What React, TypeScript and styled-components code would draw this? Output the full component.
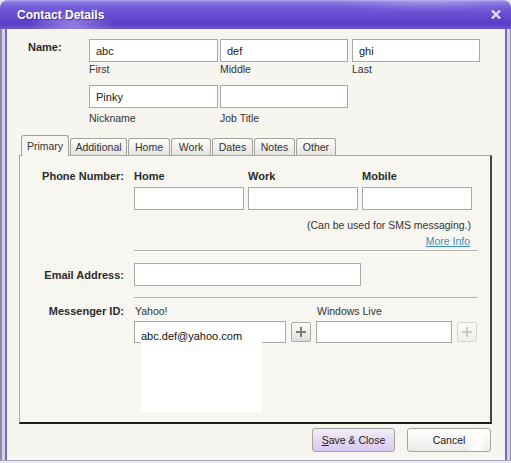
import styled, { createGlobalStyle, css } from 'styled-components'

const GlobalStyle = createGlobalStyle`
  html, body {
    margin: 0;
    padding: 0;
    background: #e6e5ea;
  }
  body {
    font-family: 'Liberation Sans', Arial, sans-serif;
  }
`

const tabs = [
  { name: 'Primary', w: 48 },
  { name: 'Additional', w: 57 },
  { name: 'Home', w: 42 },
  { name: 'Work', w: 40 },
  { name: 'Dates', w: 41 },
  { name: 'Notes', w: 41 },
  { name: 'Other', w: 40 },
]

const PlusIcon = ({ color }: { color: string }) => (
  <svg width="10" height="10" viewBox="0 0 10 10">
    <path d="M5 0v10M0 5h10" stroke={color} strokeWidth="2" />
  </svg>
)

const App = () => {
  return (
    <>
      <GlobalStyle />
      <Window>
        <TitleBar>
          <Title>Contact Details</Title>
          <svg width="10" height="9" viewBox="0 0 10 9">
            <path d="M1 0.5l8 8M9 0.5l-8 8" stroke="#e2ddf7" strokeWidth="2.4" />
          </svg>
        </TitleBar>
        <Frame>
          <NameSection>
            <NameLabel>Name:</NameLabel>
            <Field>
              <TextBox $w={129} readOnly value="abc" />
              <Caption>First</Caption>
            </Field>
            <Field>
              <TextBox $w={128} readOnly value="def" />
              <Caption>Middle</Caption>
            </Field>
            <Field>
              <TextBox $w={128} readOnly value="ghi" />
              <Caption>Last</Caption>
            </Field>
            <Field $newRow>
              <TextBox $w={129} readOnly value="Pinky" />
              <Caption $gap={3}>Nickname</Caption>
            </Field>
            <Field>
              <TextBox $w={128} readOnly value="" />
              <Caption $gap={3}>Job Title</Caption>
            </Field>
          </NameSection>

          <TabStrip>
            {tabs.map((t, i) => (
              <Tab key={t.name} $w={t.w} $active={i === 0}>
                {t.name}
              </Tab>
            ))}
          </TabStrip>

          <Panel>
            <FormRow $mt={13}>
              <RowLabel>Phone Number:</RowLabel>
              <div>
                <PhoneGrid>
                  <Heading>Home</Heading>
                  <Heading>Work</Heading>
                  <Heading>Mobile</Heading>
                  <TextBox $w={110} readOnly value="" />
                  <TextBox $w={110} readOnly value="" />
                  <TextBox $w={110} readOnly value="" />
                </PhoneGrid>
                <Note>(Can be used for SMS messaging.)</Note>
                <MoreInfo href="#">More Info</MoreInfo>
              </div>
            </FormRow>
            <Separator $mt={2} />

            <FormRow $mt={11}>
              <RowLabel $center>Email Address:</RowLabel>
              <TextBox $w={227} readOnly value="" />
            </FormRow>
            <Separator $mt={11} />

            <FormRow $mt={5}>
              <RowLabel>Messenger ID:</RowLabel>
              <MessengerGrid>
                <SubLabel $span={2}>Yahoo!</SubLabel>
                <SubLabel $span={2}>Windows Live</SubLabel>
                <InputWrap>
                  <TextBox $w={152} $h={22} readOnly value="" />
                  <Suggest>abc.def@yahoo.com</Suggest>
                </InputWrap>
                <PlusButton>
                  <PlusIcon color="#7b7b78" />
                </PlusButton>
                <TextBox $w={136} $h={22} readOnly value="" />
                <PlusButton $disabled>
                  <PlusIcon color="#cbcac6" />
                </PlusButton>
              </MessengerGrid>
            </FormRow>
          </Panel>

          <Footer>
            <DialogButton $w={83} $primary>
              <u>S</u>ave &amp; Close
            </DialogButton>
            <DialogButton $w={84}>Cancel</DialogButton>
          </Footer>
        </Frame>
      </Window>
    </>
  )
}

export default App

const Window = styled.div`
  width: 511px;
  height: 463px;
  display: flex;
  flex-direction: column;
  overflow: hidden;
`

const TitleBar = styled.div`
  height: 29px;
  flex-shrink: 0;
  box-sizing: border-box;
  border-radius: 8px 8px 0 0;
  display: flex;
  align-items: center;
  justify-content: space-between;
  padding: 0 10px 0 17px;
  background:
    radial-gradient(ellipse 62px 20px at 72px 24px, rgba(224, 196, 255, 0.45), rgba(224, 196, 255, 0) 70%),
    radial-gradient(ellipse 140px 12px at 430px 3px, rgba(255, 255, 255, 0.2), rgba(255, 255, 255, 0) 70%),
    linear-gradient(180deg, #b4aaee 0, #8b7ae2 2px, #7660da 6px, #6b53d4 12px, #5e44ca 20px, #5a3fc6 25px, #6a55d0 28px);
`

const Title = styled.span`
  color: #fff;
  font-weight: bold;
  font-size: 12px;
  text-shadow: 1px 1px 0 rgba(40, 20, 110, 0.55);
`

const Frame = styled.div`
  flex: 1;
  display: flex;
  flex-direction: column;
  padding: 10px 19px 0 19px;
  background: #f6f5ef;
  box-shadow:
    inset 0 -2px 0 #eceaf3,
    inset 0 -3px 0 #a4a0b8,
    inset 2px 0 0 #8d8aa6,
    inset 5px 0 0 #d6d2ec,
    inset 7px 0 0 #7668c6,
    inset -1px 0 0 #8d8aa6,
    inset -4px 0 0 #d6d2ec,
    inset -6px 0 0 #7668c6;
`

const NameSection = styled.div`
  display: grid;
  grid-template-columns: 70px 131px 132px 128px;
  row-gap: 9px;
`

const NameLabel = styled.div`
  padding: 1px 0 0 9px;
  font-size: 11px;
  line-height: 14px;
  font-weight: bold;
  color: #2b2b2b;
`

const Field = styled.div<{ $newRow?: boolean }>`
  display: flex;
  flex-direction: column;
  ${(p) => p.$newRow && 'grid-column-start: 2;'}
`

const TextBox = styled.input<{ $w: number; $h?: number }>`
  box-sizing: border-box;
  width: ${(p) => p.$w}px;
  height: ${(p) => p.$h ?? 23}px;
  margin: 0;
  padding: 0 6px;
  border: 1px solid #a9a8a2;
  border-radius: 0;
  background: #fff;
  font-family: 'Liberation Sans', Arial, sans-serif;
  font-size: 11px;
  color: #222;
  outline: none;
`

const Caption = styled.div<{ $gap?: number }>`
  margin-top: ${(p) => p.$gap ?? 0}px;
  font-size: 10.5px;
  line-height: 14px;
  color: #333;
`

const TabStrip = styled.div`
  display: flex;
  align-items: flex-end;
  gap: 1px;
  margin-top: 10px;
  padding-left: 2px;
  height: 20px;
`

const Tab = styled.div<{ $active?: boolean; $w: number }>`
  box-sizing: border-box;
  width: ${(p) => p.$w}px;
  height: 17px;
  display: flex;
  align-items: center;
  justify-content: center;
  border: 1px solid #a2a29c;
  border-bottom: none;
  border-radius: 3px 3px 0 0;
  background: linear-gradient(#fefefd, #e4e3de);
  font-size: 10.5px;
  color: #333;
  ${(p) =>
    p.$active &&
    css`
      position: relative;
      z-index: 1;
      height: 21px;
      margin-bottom: -1px;
      padding-bottom: 1px;
      background: #f7f6f0;
    `}
`

const Panel = styled.div`
  box-sizing: border-box;
  height: 269px;
  display: flex;
  flex-direction: column;
  background: #f7f6f0;
  border-top: 1px solid #a9a8a2;
  border-left: 1px solid #a9a8a2;
  border-right: 2px solid #454543;
  border-bottom: 2px solid #1c1c1c;
`

const FormRow = styled.div<{ $mt: number }>`
  display: grid;
  grid-template-columns: 104px 344px;
  column-gap: 10px;
  margin-top: ${(p) => p.$mt}px;
`

const RowLabel = styled.div<{ $center?: boolean }>`
  align-self: ${(p) => (p.$center ? 'center' : 'start')};
  text-align: right;
  font-size: 11px;
  line-height: 14px;
  font-weight: bold;
  color: #2b2b2b;
`

const PhoneGrid = styled.div`
  display: grid;
  grid-template-columns: repeat(3, 110px);
  column-gap: 4px;
  row-gap: 4px;
`

const Heading = styled.div`
  font-size: 11px;
  line-height: 14px;
  font-weight: bold;
  color: #2b2b2b;
`

const Note = styled.div`
  margin-top: 8px;
  padding-right: 7px;
  text-align: right;
  font-size: 10.5px;
  line-height: 14px;
  color: #333;
`

const MoreInfo = styled.a`
  display: block;
  margin-top: 2px;
  padding-right: 8px;
  text-align: right;
  font-size: 10.5px;
  line-height: 14px;
  color: #3b8fbf;
  text-decoration: underline;
`

const Separator = styled.div<{ $mt: number }>`
  width: 344px;
  margin: ${(p) => p.$mt}px 0 0 114px;
  border-top: 1px solid #b3b2ab;
  border-bottom: 1px solid #fff;
`

const MessengerGrid = styled.div`
  display: grid;
  grid-template-columns: 152px 20px 136px 20px;
  column-gap: 5px;
  row-gap: 3px;
  align-items: start;
`

const SubLabel = styled.div<{ $span: number }>`
  grid-column: span ${(p) => p.$span};
  padding-left: 1px;
  font-size: 10.5px;
  line-height: 14px;
  color: #333;
`

const InputWrap = styled.div`
  position: relative;
  height: 22px;
`

const Suggest = styled.div`
  position: absolute;
  left: 7px;
  top: 4px;
  width: 121px;
  height: 87px;
  box-sizing: border-box;
  padding-top: 4px;
  background: #fff;
  font-size: 11px;
  line-height: 14px;
  color: #111;
`

const PlusButton = styled.div<{ $disabled?: boolean }>`
  box-sizing: border-box;
  width: 20px;
  height: 20px;
  margin-top: 1px;
  display: flex;
  align-items: center;
  justify-content: center;
  border: 1px solid ${(p) => (p.$disabled ? '#d6d5d0' : '#a9a8a2')};
  border-radius: 2px;
  background: ${(p) =>
    p.$disabled ? 'linear-gradient(#fbfbfa, #efeeea)' : 'linear-gradient(#fdfdfc, #dedddb)'};
`

const Footer = styled.div`
  display: flex;
  justify-content: flex-end;
  gap: 12px;
  margin-top: 4px;
  padding-right: 1px;
`

const DialogButton = styled.button<{ $primary?: boolean; $w: number }>`
  box-sizing: border-box;
  width: ${(p) => p.$w}px;
  height: 24px;
  padding: 0;
  border: 1px solid #a5a49e;
  border-radius: 3px;
  background: ${(p) =>
    p.$primary
      ? 'linear-gradient(#f4effb, #e2d6f5 60%, #d9caf1)'
      : 'linear-gradient(90deg, rgba(255,255,255,0) 70%, rgba(255,255,255,0.9) 85%, rgba(255,255,255,0) 100%), linear-gradient(#ffffff, #ecebe7)'};
  font-family: 'Liberation Sans', Arial, sans-serif;
  font-size: 10.5px;
  color: #222;
`
